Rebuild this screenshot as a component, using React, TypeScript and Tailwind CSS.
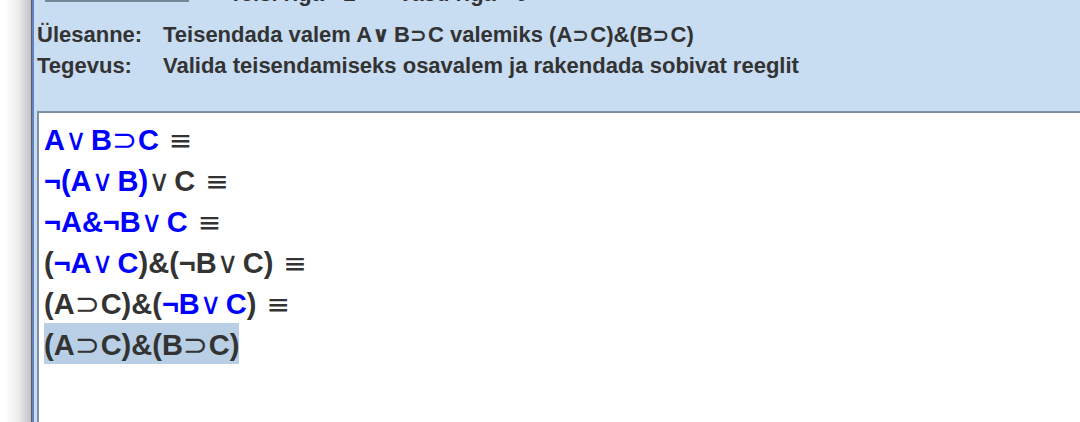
import React from "react";

type Part = { text: string; blue?: boolean };

const HEADER_OPERATORS: Record<string, string> = {
  "∨": "inline-block w-[22px] font-['DejaVu_Sans',sans-serif] text-[22px] leading-none font-bold",
  "⊃": "inline-block w-[18px] font-['DejaVu_Sans',sans-serif] text-[20px] leading-none font-bold",
};

function Formula({ text, large }: { text: string; large?: boolean }) {
  return (
    <>
      {Array.from(text).map((ch, i) => {
        if (HEADER_OPERATORS[ch]) {
          return (
            <span
              key={i}
              className={
                large
                  ? "inline-block w-[26px] font-['DejaVu_Sans',sans-serif] text-[30px] leading-none font-normal"
                  : HEADER_OPERATORS[ch]
              }
            >
              {ch}
            </span>
          );
        }
        return <React.Fragment key={i}>{ch}</React.Fragment>;
      })}
    </>
  );
}

const STEPS: { parts: Part[]; last?: boolean }[] = [
  { parts: [{ text: "A∨B⊃C", blue: true }] },
  { parts: [{ text: "¬(A∨B)", blue: true }, { text: "∨C" }] },
  { parts: [{ text: "¬A&¬B∨C", blue: true }] },
  { parts: [{ text: "(" }, { text: "¬A∨C", blue: true }, { text: ")&(¬B∨C)" }] },
  { parts: [{ text: "(A⊃C)&(" }, { text: "¬B∨C", blue: true }, { text: ")" }] },
  { parts: [{ text: "(A⊃C)&(B⊃C)" }], last: true },
];

export default function App() {
  return (
    <div className="flex h-screen overflow-hidden bg-white font-['Liberation_Sans',sans-serif] font-bold text-[#333333]">
      <div className="w-8 shrink-0 border-r border-[#536274] bg-linear-to-r from-white from-15% via-[#ececec] via-60% to-[#c0c0c0]" />
      <main className="flex min-w-0 flex-1 flex-col border-l-2 border-[#6382bf] bg-[#c8dcf2] pl-[3px]">
        <header className="flex h-[111px] flex-col text-[22px] leading-[31px] whitespace-nowrap">
          <div className="flex h-[19px] items-start overflow-hidden pl-2">
            <div className="h-0.5 w-36 bg-[#778899]" />
            <div className="-mt-[22px] ml-10 flex">
              <span className="w-[169px]">Teisi riga - 2</span>
              <span>Vasu riga - 0</span>
            </div>
          </div>
          <dl className="grid grid-cols-[126px_1fr]">
            <dt>Ülesanne:</dt>
            <dd>
              Teisendada valem <Formula text="A∨B⊃C" /> valemiks <Formula text="(A⊃C)&(B⊃C)" />
            </dd>
            <dt>Tegevus:</dt>
            <dd>Valida teisendamiseks osavalem ja rakendada sobivat reeglit</dd>
          </dl>
        </header>
        <section className="flex-1 border-t-2 border-l-2 border-[#7d8fa3] bg-white pt-[5px] pl-[5px]">
          <ol className="text-[29px] leading-[37px] whitespace-nowrap">
            {STEPS.map((step, i) => (
              <li key={i} className="flex">
                <span className={step.last ? "bg-[#b8cfe5] pt-1" : "pt-1"}>
                  {step.parts.map((p, j) => (
                    <span key={j} className={p.blue ? "text-[#0000ff]" : ""}>
                      <Formula text={p.text} large />
                    </span>
                  ))}
                </span>
                {!step.last && (
                  <span className="pt-1 pl-2.5 font-['DejaVu_Sans',sans-serif] text-[28px] font-normal">≡</span>
                )}
              </li>
            ))}
          </ol>
        </section>
      </main>
    </div>
  );
}
